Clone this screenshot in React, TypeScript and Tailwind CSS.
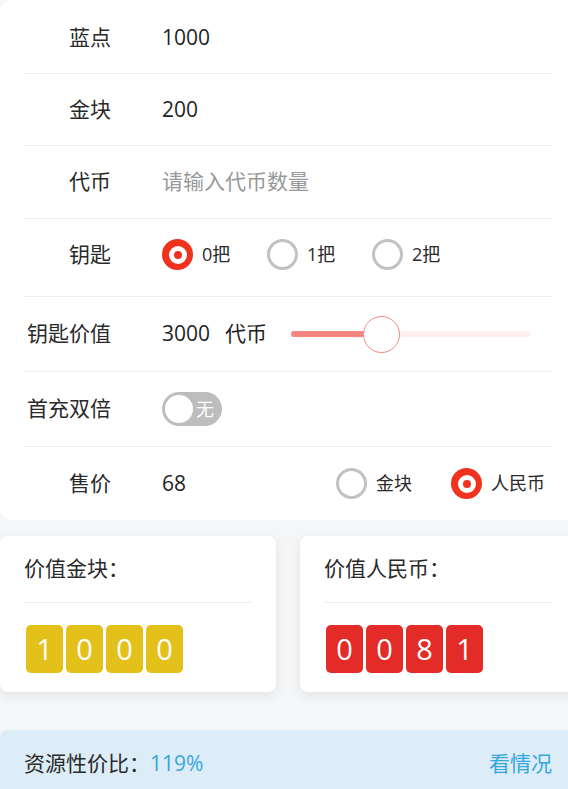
import { useState } from "react";

const font = "font-['Open_Sans','Noto_Sans_CJK_SC',sans-serif]";

function Radio({ checked, label, onClick }: { checked: boolean; label: string; onClick?: () => void }) {
  return (
    <button className="flex items-center gap-[9px]" onClick={onClick} type="button">
      {checked ? (
        <span className="flex h-[31px] w-[31px] items-center justify-center rounded-full bg-[#f0321e]">
          <span className="flex h-[18px] w-[18px] items-center justify-center rounded-full bg-white">
            <span className="h-[8px] w-[8px] rounded-full bg-[#f0321e]" />
          </span>
        </span>
      ) : (
        <span className="h-[31px] w-[31px] rounded-full border-[3px] border-[#c2c2c2] bg-white" />
      )}
      <span className="text-[18px] text-[#2a2a2a]">{label}</span>
    </button>
  );
}

function Row({ label, height, last, children }: { label: string; height: string; last?: boolean; children: React.ReactNode }) {
  return (
    <div className={`flex items-center ${height} ${last ? "" : "border-b border-[#eeeeee]"}`}>
      <span className="w-[87px] shrink-0 text-right text-[21px] text-[#2a2a2a]">{label}</span>
      <div className="ml-[51px] flex flex-1 items-center">{children}</div>
    </div>
  );
}

function Digits({ value, color }: { value: string; color: string }) {
  return (
    <div className="ml-[2px] flex gap-[3px]">
      {value.split("").map((d, i) => (
        <span
          className={`flex h-[48px] w-[37px] items-center justify-center rounded-[5px] text-[29px] text-white ${color}`}
          key={i}
        >
          {d}
        </span>
      ))}
    </div>
  );
}

export default function App() {
  const [keys, setKeys]   = useState(0);
  const [price, setPrice] = useState("rmb");

  return (
    <div className={`h-[789px] w-[568px] overflow-hidden bg-[#f5f6f8] ${font}`}>
      <div className="w-[576px]">
        <section className="rounded-[12px] bg-white px-6">
          <Row height="h-[74px] pt-[2px]" label="蓝点">
            <span className="text-[21px] text-[#1f1f1f]">1000</span>
          </Row>
          <Row height="h-[72px]" label="金块">
            <span className="text-[21px] text-[#1f1f1f]">200</span>
          </Row>
          <Row height="h-[73px]" label="代币">
            <input
              className="w-[300px] bg-transparent text-[21px] text-[#1f1f1f] outline-none placeholder:text-[#999]"
              placeholder="请输入代币数量"
            />
          </Row>
          <Row height="h-[78px] pb-[6px]" label="钥匙">
            {[0, 1, 2].map((n) => (
              <div className="w-[105px]" key={n}>
                <Radio checked={keys === n} label={`${n}把`} onClick={() => setKeys(n)} />
              </div>
            ))}
          </Row>
          <Row height="h-[75px]" label="钥匙价值">
            <span className="text-[21px] text-[#1f1f1f]">3000</span>
            <span className="ml-[15px] text-[21px] text-[#1f1f1f]">代币</span>
            <div className="relative ml-[24px] flex h-[38px] w-[240px] items-center">
              <div className="h-[6px] w-full rounded-full bg-[#fff0f0]" />
              <div className="absolute left-0 h-[6px] w-[90px] rounded-l-full bg-[#f6877f]" />
              <div className="absolute left-[72px] h-[37px] w-[37px] rounded-full border border-[#f08a80] bg-white" />
            </div>
          </Row>
          <Row height="h-[75px]" label="首充双倍">
            <div className="flex h-[34px] w-[60px] items-center rounded-full bg-[#bdbdbd] p-[3px]">
              <span className="h-[28px] w-[28px] rounded-full bg-white" />
              <span className="ml-[3px] text-[18px] text-white">无</span>
            </div>
          </Row>
          <Row height="h-[73px]" label="售价" last>
            <span className="text-[21px] text-[#1f1f1f]">68</span>
            <div className="ml-auto mr-[7px] flex items-center gap-[39px]">
              <Radio checked={price === "gold"} label="金块" onClick={() => setPrice("gold")} />
              <Radio checked={price === "rmb"} label="人民币" onClick={() => setPrice("rmb")} />
            </div>
          </Row>
        </section>

        <div className="mt-4 flex gap-6">
          <article className="w-[276px] rounded-[8px] bg-white px-6 pb-[19px] shadow-[0_4px_12px_rgba(0,0,0,0.08)]">
            <div className="flex h-[67px] items-center border-b border-[#eeeeee] text-[21px] text-[#2a2a2a]">价值金块：</div>
            <div className="mt-[22px]">
              <Digits color="bg-[#e4c01a]" value="1000" />
            </div>
          </article>
          <article className="w-[276px] rounded-[8px] bg-white px-6 pb-[19px] shadow-[0_4px_12px_rgba(0,0,0,0.08)]">
            <div className="flex h-[67px] items-center border-b border-[#eeeeee] text-[21px] text-[#2a2a2a]">价值人民币：</div>
            <div className="mt-[22px]">
              <Digits color="bg-[#e32b27]" value="0081" />
            </div>
          </article>
        </div>

        <div className="mt-[38px] flex h-[68px] items-center justify-between rounded-t-[8px] bg-[#dcedf8] px-6 text-[21px]">
          <p className="text-[#2a2a2a]">
            资源性价比：<span className="text-[#36a6e0]">119%</span>
          </p>
          <span className="text-[#36a6e0]">看情况</span>
        </div>
      </div>
    </div>
  );
}
